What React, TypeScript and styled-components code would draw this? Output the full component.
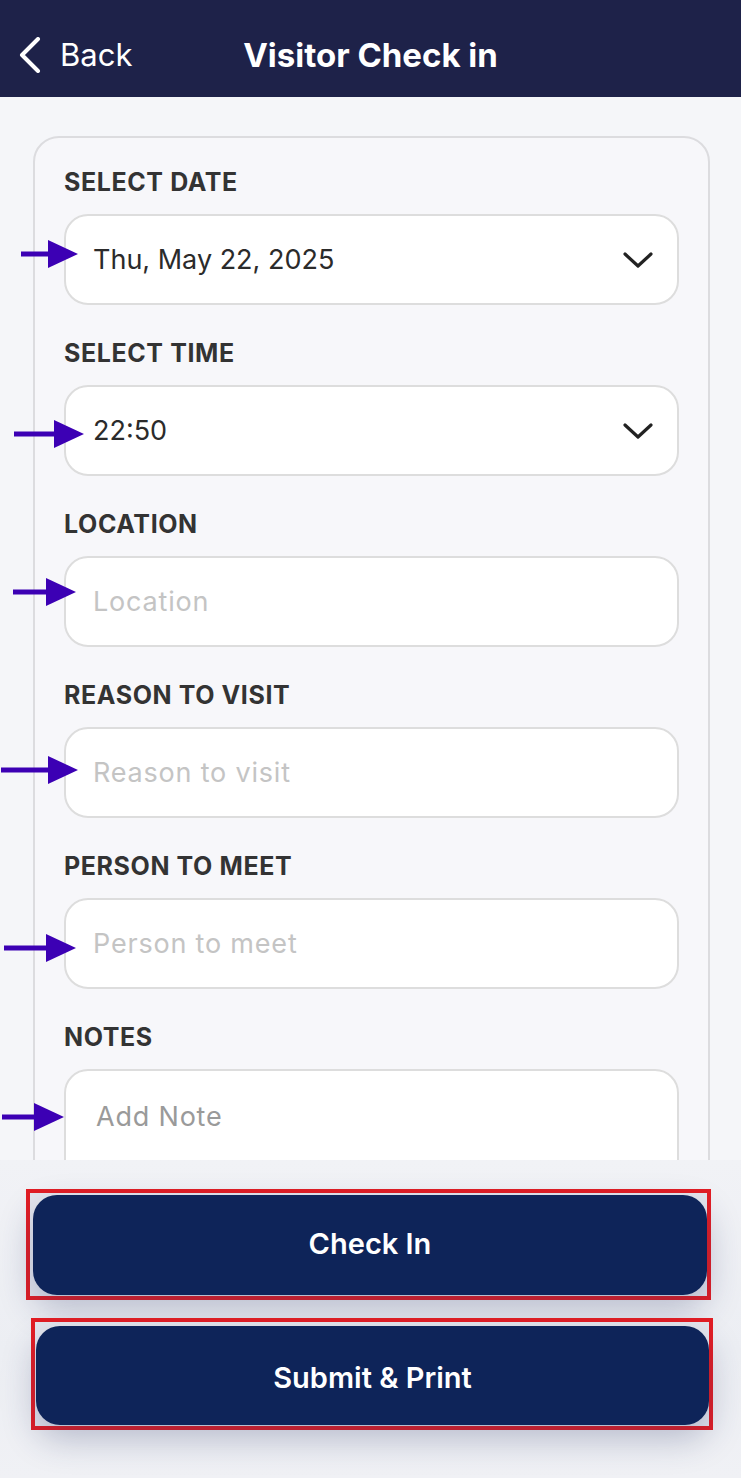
import React from "react";
import styled, { createGlobalStyle } from "styled-components";

const Global = createGlobalStyle`
  html, body { margin: 0; padding: 0; }
  body { background: #f5f6f9; font-family: Inter, "Noto Sans", sans-serif; }
  * { box-sizing: border-box; }
`;

const Page = styled.div`
  display: flex;
  flex-direction: column;
  height: 1478px;
  background: #f5f6f9;
  overflow: hidden;
`;

const Header = styled.header`
  height: 97px;
  flex: none;
  background: #1e2249;
  display: grid;
  grid-template-columns: 1fr auto 1fr;
  align-items: center;
  padding: 12px 19px 0 19px;
`;

const BackButton = styled.div`
  display: flex;
  align-items: center;
  gap: 19px;
  color: #ffffff;
  font-size: 31px;
  font-weight: 400;
`;

const Title = styled.h1`
  margin: 0;
  color: #ffffff;
  font-size: 33px;
  font-weight: 700;
  letter-spacing: 0;
`;

const Scroll = styled.main`
  height: 1063px;
  flex: none;
  overflow: hidden;
  padding: 39px 31px 0 33px;
`;

const Card = styled.section`
  border: 2px solid #dcdcdf;
  border-radius: 26px;
  background: #f7f7fa;
  padding: 30px 29px 0 29px;
  display: flex;
  flex-direction: column;
  gap: 34px;
`;

const Field = styled.div`
  display: flex;
  flex-direction: column;
  gap: 18px;
`;

const Label = styled.div`
  font-size: 25px;
  line-height: 28px;
  font-weight: 700;
  color: #333333;
  letter-spacing: 0.6px;
`;

const InputBox = styled.div<{ $tall?: boolean }>`
  position: relative;
  height: ${(p) => (p.$tall ? "200px" : "91px")};
  border: 2px solid #dddddd;
  border-radius: 24px;
  background: #ffffff;
  display: flex;
  align-items: ${(p) => (p.$tall ? "flex-start" : "center")};
  padding: ${(p) => (p.$tall ? "29px 24px 0 30px" : "0 24px 0 27px")};
`;

const Value = styled.span<{ $tone: "value" | "placeholder" | "note" }>`
  font-size: 27px;
  line-height: 34px;
  letter-spacing: ${(p) => (p.$tone === "value" ? "0" : "0.8px")};
  color: ${(p) =>
    p.$tone === "value" ? "#2b2b2b" : p.$tone === "note" ? "#9a9a9a" : "#c4c4c4"};
`;

const Chevron = styled.svg`
  margin-left: auto;
  flex: none;
`;

const ArrowMark = styled.svg<{ $left: number; $top: number }>`
  position: absolute;
  left: ${(p) => p.$left}px;
  top: ${(p) => p.$top}px;
  overflow: visible;
`;

const Footer = styled.footer`
  flex: 1;
  display: flex;
  flex-direction: column;
  gap: 18px;
  padding-top: 29px;
  background: linear-gradient(#f1f2f6, #eceef3 60%, #f0f1f5);
`;

const RedBox = styled.div<{ $ml: number; $pad: string }>`
  align-self: flex-start;
  margin-left: ${(p) => p.$ml}px;
  border: 4px solid #e21d24;
  padding: ${(p) => p.$pad};
  background: #e4e6ee;
`;

const ActionButton = styled.button<{ $w: number; $h: number; $shift: number }>`
  display: flex;
  align-items: center;
  justify-content: center;
  width: ${(p) => p.$w}px;
  height: ${(p) => p.$h}px;
  padding: ${(p) => (p.$shift > 0 ? `${p.$shift}px 0 0` : `0 0 ${-p.$shift}px`)};
  border: none;
  border-radius: 24px;
  background: #0e2459;
  color: #ffffff;
  font-family: Inter, "Noto Sans", sans-serif;
  font-size: 29px;
  font-weight: 600;
  box-shadow: 0 14px 34px rgba(40, 52, 100, 0.28);
`;

function Arrow({ tail, tip, y, inputTop }: { tail: number; tip: number; y: number; inputTop: number }) {
  const w = tip - tail;
  const head = 30;
  return (
    <ArrowMark
      $left={tail - 66}
      $top={y - (inputTop + 2) - 15}
      width={w}
      height={30}
      viewBox={`0 0 ${w} 30`}
    >
      <rect x={0} y={12.5} width={w - head + 2} height={5} fill="#3c00b4" />
      <polygon points={`${w - head},1 ${w},15 ${w - head},29`} fill="#3c00b4" />
    </ArrowMark>
  );
}

function DownChevron() {
  return (
    <Chevron width="30" height="16" viewBox="0 0 30 16">
      <path d="M2 2 L15 14 L28 2" fill="none" stroke="#222" strokeWidth="3.2" strokeLinecap="round" strokeLinejoin="round" />
    </Chevron>
  );
}

type FieldDef = {
  label: string;
  text: string;
  tone: "value" | "placeholder" | "note";
  select?: boolean;
  tall?: boolean;
  arrow: { tail: number; tip: number; y: number; top: number };
};

const fields: FieldDef[] = [
  { label: "SELECT DATE", text: "Thu, May 22, 2025", tone: "value", select: true, arrow: { tail: 21, tip: 78, y: 254, top: 214 } },
  { label: "SELECT TIME", text: "22:50", tone: "value", select: true, arrow: { tail: 14, tip: 84, y: 434, top: 385 } },
  { label: "LOCATION", text: "Location", tone: "placeholder", arrow: { tail: 13, tip: 76, y: 592, top: 556 } },
  { label: "REASON TO VISIT", text: "Reason to visit", tone: "placeholder", arrow: { tail: 1, tip: 78, y: 769, top: 726 } },
  { label: "PERSON TO MEET", text: "Person to meet", tone: "placeholder", arrow: { tail: 4, tip: 76, y: 946, top: 896 } },
  { label: "NOTES", text: "Add Note", tone: "note", tall: true, arrow: { tail: 2, tip: 64, y: 1115, top: 1067 } },
];

export default function App() {
  return (
    <>
      <Global />
      <Page>
        <Header>
          <BackButton>
            <svg width="22" height="36" viewBox="0 0 22 36">
              <path d="M19 2 L3 18 L19 34" fill="none" stroke="#fff" strokeWidth="4" strokeLinecap="round" strokeLinejoin="round" />
            </svg>
            Back
          </BackButton>
          <Title>Visitor Check in</Title>
          <div />
        </Header>
        <Scroll>
          <Card>
            {fields.map((f) => (
              <Field key={f.label}>
                <Label>{f.label}</Label>
                <InputBox $tall={f.tall}>
                  <Arrow tail={f.arrow.tail} tip={f.arrow.tip} y={f.arrow.y} inputTop={f.arrow.top} />
                  <Value $tone={f.tone}>{f.text}</Value>
                  {f.select && <DownChevron />}
                </InputBox>
              </Field>
            ))}
          </Card>
        </Scroll>
        <Footer>
          <RedBox $ml={26} $pad="2px 0 1px 3px">
            <ActionButton $w={674} $h={100} $shift={-4}>Check In</ActionButton>
          </RedBox>
          <RedBox $ml={31} $pad="4px 0 1px 1px">
            <ActionButton $w={673} $h={99} $shift={4}>Submit &amp; Print</ActionButton>
          </RedBox>
        </Footer>
      </Page>
    </>
  );
}
